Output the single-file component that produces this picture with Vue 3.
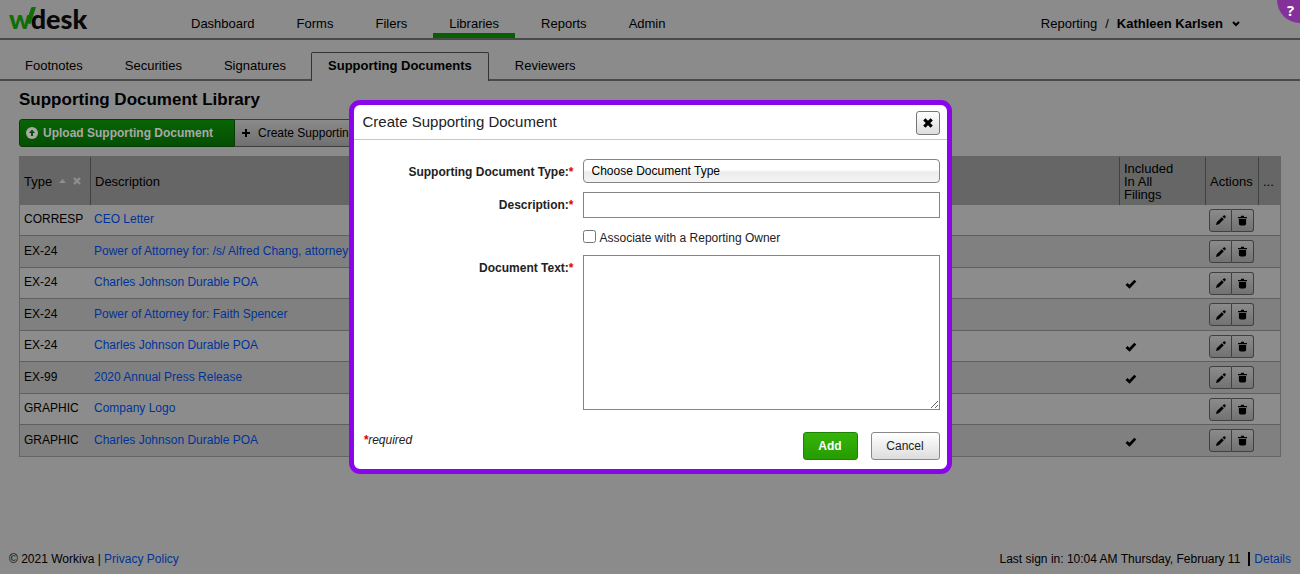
<script setup>
import { ref } from 'vue'

const nav = ['Dashboard', 'Forms', 'Filers', 'Libraries', 'Reports', 'Admin']
const tabs = ['Footnotes', 'Securities', 'Signatures', 'Supporting Documents', 'Reviewers']
const rows = [
  { type: 'CORRESP', name: 'CEO Letter', all: false },
  { type: 'EX-24', name: 'Power of Attorney for: /s/ Alfred Chang, attorney', all: false },
  { type: 'EX-24', name: 'Charles Johnson Durable POA', all: true },
  { type: 'EX-24', name: 'Power of Attorney for: Faith Spencer', all: false },
  { type: 'EX-24', name: 'Charles Johnson Durable POA', all: true },
  { type: 'EX-99', name: '2020 Annual Press Release', all: true },
  { type: 'GRAPHIC', name: 'Company Logo', all: false },
  { type: 'GRAPHIC', name: 'Charles Johnson Durable POA', all: true }
]
const docType = ref('')
const description = ref('')
const associate = ref(false)
const docText = ref('')
</script>

<template>
  <div class="page">
    <header class="top">
      <a class="logo" href="#" aria-label="wdesk">
        <span class="logo-w">w</span><span>desk</span>
        <svg class="logo-tick" viewBox="0 0 12 18" aria-hidden="true"><path d="M2 17 7 2Q7.400 1 8.500 1H12L6.500 18Z" /></svg>
      </a>
      <nav class="nav">
        <a v-for="n in nav" :key="n" href="#" :class="{ active: n === 'Libraries' }">{{ n }}</a>
      </nav>
      <div class="user">
        <span>Reporting</span><span>/</span>
        <button type="button" class="user-btn">
          Kathleen Karlsen
          <svg width="8" height="6" viewBox="0 0 8 6" aria-hidden="true"><path d="M1 1 4 4 7 1" fill="none" stroke="#000" stroke-width="2" /></svg>
        </button>
      </div>
      <button type="button" class="help" aria-label="Help">?</button>
    </header>

    <nav class="tabs">
      <a v-for="t in tabs" :key="t" href="#" :class="{ active: t === 'Supporting Documents' }">{{ t }}</a>
    </nav>

    <main class="main">
      <h1>Supporting Document Library</h1>
      <div class="toolbar">
        <button type="button" class="upload">
          <svg width="12" height="12" viewBox="0 0 12 12" aria-hidden="true">
            <circle cx="6" cy="6" r="6" fill="#a9a9a9" />
            <path d="M6 2.5 9 6H7V9H5V6H3Z" fill="#054f02" />
          </svg>
          Upload Supporting Document
        </button>
        <button type="button" class="create">
          <svg width="8" height="8" viewBox="0 0 8 8" aria-hidden="true"><path d="M4 0V8M0 4H8" stroke="#000" stroke-width="2" /></svg>
          Create Supporting Document
        </button>
      </div>

      <table class="grid">
        <thead>
          <tr>
            <th class="c-type">
              <span class="sort">Type
                <svg width="7" height="4" viewBox="0 0 7 4" aria-hidden="true"><path d="M3.5 0 7 4H0Z" fill="#8e8e8e" /></svg>
                <svg width="8" height="8" viewBox="0 0 8 8" aria-hidden="true"><path d="M1 1 7 7M7 1 1 7" stroke="#8e8e8e" stroke-width="2.4" /></svg>
              </span>
            </th>
            <th>Description</th>
            <th class="c-all">Included<br>In All<br>Filings</th>
            <th class="c-act">Actions</th>
            <th class="c-more">...</th>
          </tr>
        </thead>
        <tbody>
          <tr v-for="(r, i) in rows" :key="i">
            <td>{{ r.type }}</td>
            <td class="name"><a href="#">{{ r.name }}</a></td>
            <td class="check">
              <svg v-if="r.all" width="12" height="10" viewBox="0 0 12 10" role="img" aria-label="Included"><path d="M1.5 5 4.5 7.8 10.3 1.6" fill="none" stroke="#000" stroke-width="2.8" /></svg>
            </td>
            <td class="act">
              <div class="pair">
                <button type="button" aria-label="Edit">
                  <svg width="10" height="10" viewBox="0 0 10 10" aria-hidden="true"><path d="M0 10 .7 7.2 5.8 2.2 7.8 4.2 2.8 9.3ZM6.5 1.6 7.8.4Q8.4 0 9 .5L9.6 1.1Q10 1.7 9.6 2.2L8.4 3.5Z" /></svg>
                </button>
                <button type="button" aria-label="Delete">
                  <svg width="9" height="11" viewBox="0 0 10 11" aria-hidden="true"><path d="M0 1.5H3L3.5.3H6.5L7 1.5H10V3H0ZM1 3.7H9V9Q9 11 7 11H3Q1 11 1 9Z" /></svg>
                </button>
              </div>
            </td>
            <td></td>
          </tr>
        </tbody>
      </table>
    </main>

    <footer class="foot">
      <span>© 2021 Workiva | <a href="#">Privacy Policy</a></span>
      <span class="signin"><span>Last sign in: 10:04 AM Thursday, February 11</span><a href="#">Details</a></span>
    </footer>

    <div class="overlay">
      <form class="dialog" role="dialog" aria-labelledby="dlg-title" @submit.prevent>
        <div class="dlg-head">
          <h2 id="dlg-title">Create Supporting Document</h2>
          <button type="button" class="close" aria-label="Close">
            <svg width="10" height="10" viewBox="0 0 10 10" aria-hidden="true"><path d="M1.3 1.3 8.7 8.7M8.7 1.3 1.3 8.7" stroke="#000" stroke-width="3.2" /></svg>
          </button>
        </div>
        <div class="fields">
          <label for="type">Supporting Document Type:<i>*</i></label>
          <select id="type" v-model="docType">
            <option value="">Choose Document Type</option>
          </select>
          <label for="desc">Description:<i>*</i></label>
          <input id="desc" v-model="description" type="text">
          <div class="assoc">
            <input id="assoc" v-model="associate" type="checkbox">
            <label for="assoc">Associate with a Reporting Owner</label>
          </div>
          <label for="text">Document Text:<i>*</i></label>
          <textarea id="text" v-model="docText"></textarea>
        </div>
        <div class="dlg-foot">
          <span class="req"><b>*</b>required</span>
          <button type="submit" class="add">Add</button>
          <button type="button" class="cancel">Cancel</button>
        </div>
      </form>
    </div>
  </div>
</template>

<style>
body { background: #8b8b8b; }
</style>

<style scoped>
.page, .page * { box-sizing: border-box; }
.page {
  min-height: 100vh;
  display: flex;
  flex-direction: column;
  background: #8b8b8b;
  color: #000;
  font: 12px/16px "Liberation Sans", Arial, sans-serif;
}
a { color: inherit; text-decoration: none; }
button, input, select, textarea { font: inherit; color: inherit; margin: 0; }
button { cursor: pointer; padding: 0; }
svg { display: block; flex: none; }
h1, h2 { margin: 0; }

.top {
  position: relative;
  display: flex;
  height: 40px;
  border-bottom: 2px solid #494949;
  padding-left: 9px;
  overflow: hidden;
  font-size: 13px;
}
.logo {
  position: relative;
  width: 166px;
  font: 900 27px/38px Lato, sans-serif;
  color: #080808;
}
.logo-w { color: #126d09; }
.logo-tick { position: absolute; left: 15px; top: 6px; width: 12px; height: 18px; fill: #126d09; }
.nav { display: flex; gap: 10px; }
.nav a { padding: 16px 16px 0; }
.nav a.active { border-bottom: 5px solid #075f00; }
.user { margin-left: auto; padding: 16px 60px 0 0; display: flex; gap: 8px; align-items: flex-start; }
.user-btn { display: flex; align-items: center; gap: 9px; border: 0; background: none; font-weight: bold; }
.help {
  position: absolute;
  right: -23px;
  top: -23px;
  width: 46px;
  height: 46px;
  border: 0;
  border-radius: 50%;
  background: #84309b;
  color: #fff;
  font: bold 15px/20px "Open Sans", sans-serif;
  padding: 19px 19px 0 0;
}

.tabs { display: flex; gap: 9px; height: 41px; padding: 12px 0 0 8px; font-size: 13px; border-bottom: 2px solid #494949; }
.tabs a { padding: 6px 16px 0 17px; height: 27px; }
.tabs a.active {
  height: 29px;
  padding: 5px 16px 0;
  background: #8b8b8b;
  border: 1px solid #333;
  border-bottom: 0;
  border-radius: 2px 2px 0 0;
  font-weight: bold;
}

.main { flex: 1; padding: 8px 19px 0; }
h1 { font-size: 17px; line-height: 22px; }
.toolbar { display: flex; margin: 8px 0 9px; }
.toolbar button { display: flex; align-items: center; height: 28px; border: 1px solid #3c3c3c; }
.upload {
  gap: 5px;
  width: 216px;
  padding: 0 6px;
  border-radius: 3px 0 0 3px;
  background: linear-gradient(#096405, #054f02);
}
.toolbar .upload { border-color: #063c03; color: #a9a9a9; font-weight: bold; }
.create { gap: 8px; padding: 0 7px; border-radius: 0 3px 3px 0; background: linear-gradient(#8a8a8a, #707070); }
.toolbar .create { border-left: 0; }

.grid { width: 100%; table-layout: fixed; border-collapse: separate; border-spacing: 0; border: 1px solid #656565; }
.grid th {
  height: 48px;
  padding: 0 4px;
  background: #666;
  border-right: 1px solid #414141;
  text-align: left;
  font-weight: normal;
  font-size: 13px;
  line-height: 13px;
}
.grid th:last-child { border-right: 0; }
.c-type { width: 71px; }
.c-all { width: 86px; }
.c-act { width: 53px; }
.c-more { width: 21px; }
.sort { display: flex; align-items: center; gap: 7px; }
.grid td { height: 31px; padding: 0 4px 2px; border-bottom: 1px solid #5f5f5f; background: #8c8c8c; }
.grid tr:nth-child(even) td { height: 32px; background: #808080; }
.grid tbody tr:last-child td { height: 31px; border-bottom: 0; }
.grid .name { padding-left: 3px; }
.name a, .foot a { color: #00339a; }
.grid .check { padding: 2px 0 0 5px; }
.grid .act { padding: 0 3px; }
.pair { display: flex; }
.pair button {
  display: flex;
  align-items: center;
  justify-content: center;
  width: 22px;
  height: 23px;
  border: 1px solid #404040;
  border-radius: 0 3px 3px 0;
  background: linear-gradient(#8b8b8b, #727272);
}
.pair button:first-child { width: 23px; border-radius: 3px 0 0 3px; }
.pair button:last-child { border-left: 0; }

.foot { display: flex; justify-content: space-between; padding: 0 9px 7px; }
.signin { display: flex; align-items: center; gap: 8px; }
.signin a { border-left: 2px solid #000; padding-left: 4px; line-height: 14px; }

.overlay { position: fixed; inset: 0; display: flex; align-items: center; justify-content: center; pointer-events: none; }
.dialog {
  width: 603px;
  max-width: 100%;
  background: #fff;
  border: 5px solid #8a06ea;
  border-radius: 11px;
  color: #222;
  pointer-events: auto;
}
.dlg-head {
  display: flex;
  align-items: center;
  justify-content: space-between;
  height: 35px;
  padding: 2px 7px 0 9px;
  border-bottom: 1px solid #c6c6c6;
}
h2 { font-size: 15px; line-height: 20px; font-weight: normal; padding-bottom: 2px; }
.close {
  display: flex;
  align-items: center;
  justify-content: center;
  width: 24px;
  height: 24px;
  border: 1px solid #777;
  border-radius: 3px;
  background: linear-gradient(#fff, #ddd);
}
.fields {
  display: grid;
  grid-template-columns: 1fr 357px;
  column-gap: 9px;
  padding: 19px 7px 0 9px;
}
.fields > label { text-align: right; font-weight: bold; padding-top: 5px; }
i, b { color: #e00000; }
i { font-style: normal; font-weight: bold; }
select, .fields > input, textarea { width: 100%; border: 1px solid #858585; background: #fff; border-radius: 0; }
select {
  appearance: none;
  height: 24px;
  padding: 0 8px;
  border-radius: 4px;
  background: linear-gradient(#fff 45%, #ececec 55%, #f4f4f4);
  color: #000;
  margin-bottom: 9px;
}
.fields > input { height: 26px; padding: 0 4px; }
.assoc { grid-column: 2; display: flex; align-items: center; gap: 4px; height: 37px; padding-top: 3px; }
.assoc input { width: 13px; height: 13px; margin-bottom: 3px; }
textarea { display: block; height: 155px; resize: both; }
.dlg-foot { display: flex; gap: 13px; padding: 22px 7px 9px 10px; }
.req { margin-right: auto; font-style: italic; }
.dlg-foot button { height: 28px; border-radius: 3px; }
.add { width: 55px; border: 1px solid #1c8206; background: linear-gradient(#36b40a, #259c00); }
.dlg-foot .add { color: #fff; font-weight: bold; }
.cancel { width: 69px; border: 1px solid #888; background: linear-gradient(#fff, #ddd); }
</style>
